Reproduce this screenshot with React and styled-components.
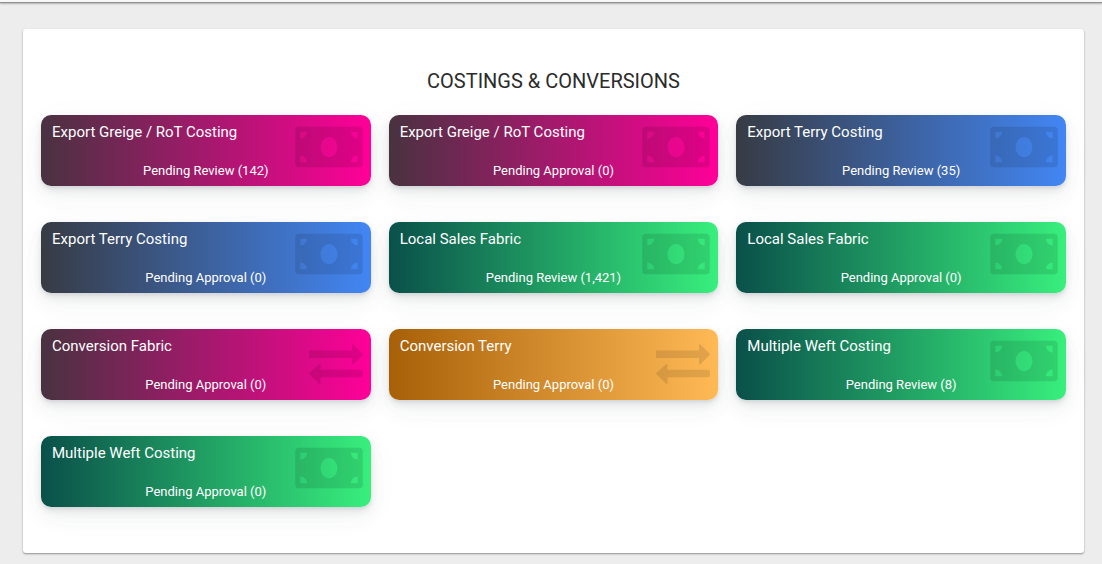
import React from "react";
import styled, { createGlobalStyle } from "styled-components";
import { FaMoneyBill } from "react-icons/fa";

const GlobalStyle = createGlobalStyle`
  * {
    box-sizing: border-box;
  }
  body {
    margin: 0;
    background: #ededed;
    font-family: Roboto, "Liberation Sans", sans-serif;
    color: #2b2b2b;
  }
`;

const TopBar = styled.header`
  height: 3px;
  background: #f8f8f8;
  border-bottom: 1px solid #8f8f92;
  box-shadow: 0 1px 2px rgba(0, 0, 0, 0.25);
`;

const Page = styled.main`
  padding: 26px 18px 11px 23px;
`;

const Panel = styled.section`
  padding: 40px 18px 46px;
  background: #fff;
  border-radius: 3px;
  box-shadow: 0 1px 2px rgba(0, 0, 0, 0.4);
`;

const Title = styled.h1`
  margin: 0 0 22px;
  font-size: 20px;
  line-height: 24px;
  font-weight: 400;
  text-align: center;
`;

const CardGrid = styled.div`
  display: grid;
  grid-template-columns: repeat(3, minmax(0, 1fr));
  gap: 36px 18px;
`;

const gradients = {
  cherry: "#493240, #f09",
  blue: "#373b44, #4286f4",
  green: "#0a504a, #38ef7d",
  orange: "#a86008, #ffba56",
};

const Card = styled.a`
  position: relative;
  display: flex;
  flex-direction: column;
  justify-content: space-between;
  min-height: 71px;
  padding: 7px 11px 5px;
  border-radius: 10px;
  color: #fff;
  text-decoration: none;
  background: linear-gradient(to right, ${(p) => gradients[p.$tone]});
  box-shadow:
    0 7px 35px rgba(90, 97, 105, 0.04),
    0 10px 18px rgba(90, 97, 105, 0.06),
    0 4px 8px rgba(90, 97, 105, 0.12),
    0 2px 3px rgba(90, 97, 105, 0.1);
`;

const CardTitle = styled.span`
  font-size: 15px;
  line-height: 20px;
`;

const CardStatus = styled.span`
  font-size: 13px;
  line-height: 20px;
  text-align: center;
`;

const CardIcon = styled.span`
  position: absolute;
  top: 5px;
  right: 8px;
  display: flex;
  align-items: center;
  height: 54px;
  color: #000;
  opacity: 0.1;
`;

const BillIcon = styled(FaMoneyBill)`
  width: 68px;
  height: 54px;
`;

const ArrowsIcon = () => (
  <svg width="54" height="54" viewBox="0 0 54 54" fill="currentColor">
    <path d="M0 16.5H43V11.5Q43 9.5 44.5 10.8L53.2 19.3Q54.3 20.4 53.2 21.5L44.5 30Q43 31.3 43 29.3V24H0Z" />
    <path d="M52 35.8H11.5V31Q11.5 29 10 30.3L0.8 38.5Q-0.3 39.6 0.8 40.7L10 49.4Q11.5 50.7 11.5 48.7V43.3H52Q54 43.3 54 41.3V37.8Q54 35.8 52 35.8Z" />
  </svg>
);

const cards = [
  ["Export Greige / RoT Costing", "Pending Review (142)", "cherry"],
  ["Export Greige / RoT Costing", "Pending Approval (0)", "cherry"],
  ["Export Terry Costing", "Pending Review (35)", "blue"],
  ["Export Terry Costing", "Pending Approval (0)", "blue"],
  ["Local Sales Fabric", "Pending Review (1,421)", "green"],
  ["Local Sales Fabric", "Pending Approval (0)", "green"],
  ["Conversion Fabric", "Pending Approval (0)", "cherry", ArrowsIcon],
  ["Conversion Terry", "Pending Approval (0)", "orange", ArrowsIcon],
  ["Multiple Weft Costing", "Pending Review (8)", "green"],
  ["Multiple Weft Costing", "Pending Approval (0)", "green"],
];

export default function App() {
  return (
    <>
      <GlobalStyle />
      <TopBar />
      <Page>
        <Panel>
          <Title>COSTINGS &amp; CONVERSIONS</Title>
          <CardGrid>
            {cards.map(([title, status, tone, Icon = BillIcon]) => (
              <Card key={title + status} href="#" $tone={tone}>
                <CardIcon aria-hidden="true">
                  <Icon />
                </CardIcon>
                <CardTitle>{title}</CardTitle>
                <CardStatus>{status}</CardStatus>
              </Card>
            ))}
          </CardGrid>
        </Panel>
      </Page>
    </>
  );
}
